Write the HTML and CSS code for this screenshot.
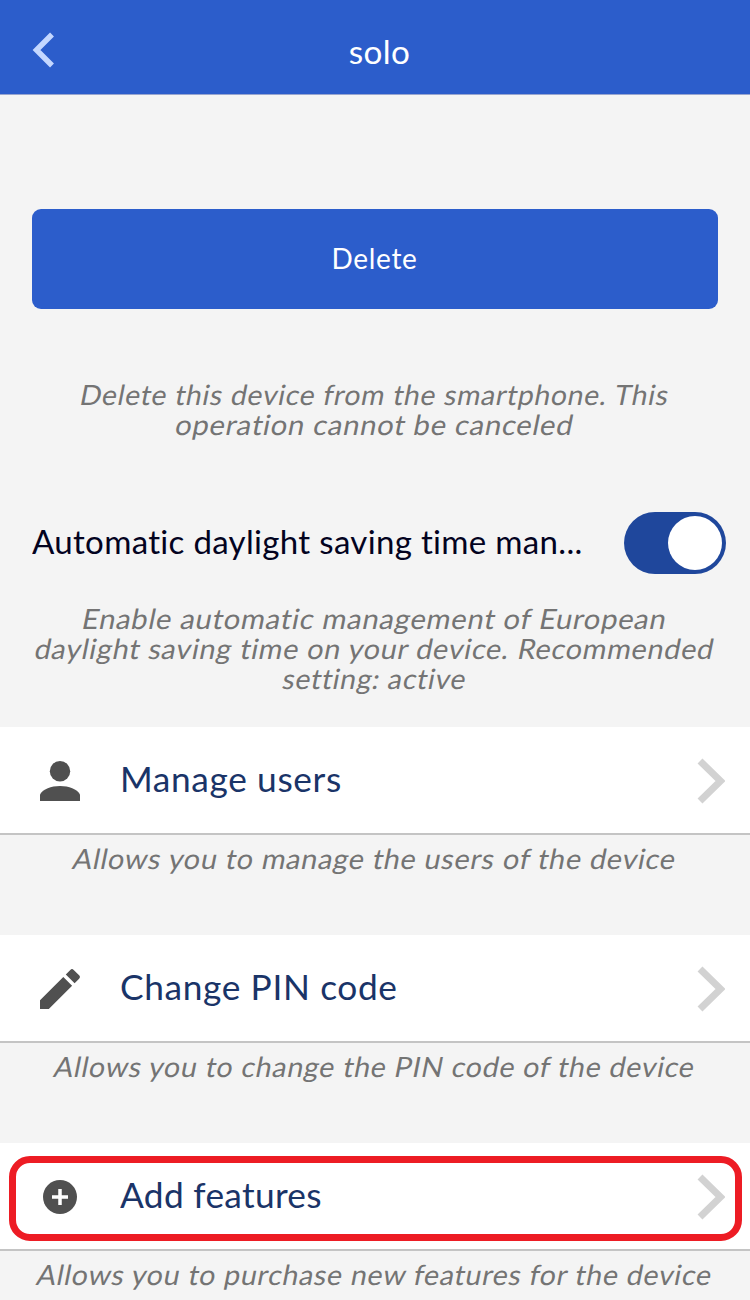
FILE: index.html
```html
<!DOCTYPE html>
<html lang="en">
<head>
    <meta charset="UTF-8">
    <meta name="viewport" content="width=device-width, initial-scale=1.0">
    <title>solo</title>
    <link rel="stylesheet" href="styles.css">
</head>
<body>

    <header class="top-bar">
        <svg class="back" viewBox="0 0 24 38"><path d="M21 3.500L5.500 19L21 34.500"/></svg>
        <h1>solo</h1>
    </header>

    <main>
        <button class="delete-btn">Delete</button>
        <p class="hint hint-delete">
            <span class="line line-narrow">Delete this device from the smartphone. This</span>
            <span class="line line-wide">operation cannot be canceled</span>
        </p>

        <div class="switch-row">
            <span class="switch-label">Automatic daylight saving time man...</span>
            <span class="switch"><span class="knob"></span></span>
        </div>
        <p class="hint hint-dst">
            <span class="line line-wide">Enable automatic management of European</span>
            <span class="line line-medium">daylight saving time on your device. Recommended</span>
            <span class="line line-narrow">setting: active</span>
        </p>

        <div class="item">
            <svg class="icon" viewBox="0 0 40 40"><circle cx="20" cy="10.2" r="10.2"/><path d="M0 40v-6.500C3 28 11 25 20 25s17 3 20 8.500V40z"/></svg>
            <span class="item-label">Manage users</span>
            <svg class="arrow" viewBox="0 0 28 46"><path d="M3 3L23.500 23L3 43"/></svg>
        </div>
        <p class="hint"><span class="line line-medium">Allows you to manage the users of the device</span></p>

        <div class="item">
            <svg class="icon" viewBox="0 0 40 40"><path d="M0 40v-8.800L23.300 7.900L32.100 16.700L8.800 40zM25.800 5.400L30.300.9Q32 -.8 33.700.9L39.100 6.300Q40.800 8 39.100 9.700L34.600 14.200z"/></svg>
            <span class="item-label">Change PIN code</span>
            <svg class="arrow" viewBox="0 0 28 46"><path d="M3 3L23.500 23L3 43"/></svg>
        </div>
        <p class="hint"><span class="line">Allows you to change the PIN code of the device</span></p>

        <div class="item">
            <svg class="icon" viewBox="0 0 40 40"><circle cx="20" cy="20" r="17"/><path class="plus" d="M20 12v16M12 20h16"/></svg>
            <span class="item-label item-label-features">Add features</span>
            <svg class="arrow" viewBox="0 0 28 46"><path d="M3 3L23.500 23L3 43"/></svg>
            <div class="highlight"></div>
        </div>
        <p class="hint"><span class="line">Allows you to purchase new features for the device</span></p>
    </main>

</body>
</html>
```

FILE: styles.css
```css
* {
    box-sizing: border-box;
}
body {
    margin: 0;
    height: 1300px;
    overflow: hidden;
    background: #f4f4f4;
    font-family: Lato, "Open Sans", sans-serif;
}
.top-bar {
    display: grid;
    grid-template-columns: 60px 1fr 50px;
    align-items: center;
    height: 95px;
    padding: 0 32px 0 31px;
    background: #2c5dcb;
    border-bottom: 1px solid #98a5cf;
}
.back {
    width: 24px;
    height: 38px;
    margin-top: 5px;
    fill: none;
    stroke: #c4d7ff;
    stroke-width: 5.500;
}
h1 {
    margin: 10px 0 0;
    color: #fff;
    font-size: 32px;
    font-weight: 400;
    line-height: 40px;
    letter-spacing: 0.4px;
    text-align: center;
    transform: scaleX(1.04);
}
main {
    padding-top: 114px;
}
.delete-btn {
    display: block;
    width: 686px;
    height: 100px;
    margin: 0 auto;
    padding: 0 1px 3px 0;
    border: none;
    border-radius: 9px;
    background: #2c5dcb;
    color: #fff;
    font-family: inherit;
    font-size: 28px;
    letter-spacing: 0.7px;
}
.hint {
    height: 100px;
    margin: 0;
    padding-top: 8px;
    color: #747474;
    font-size: 28px;
    line-height: 30px;
    letter-spacing: 0.7px;
    text-align: center;
    white-space: nowrap;
}
.line {
    display: block;
    transform: scaleX(1.02) skewX(-11deg);
}
.line-narrow {
    transform: scaleX(1.012) skewX(-11deg);
}
.line-medium {
    transform: scaleX(1.029) skewX(-11deg);
}
.line-wide {
    transform: scaleX(1.042) skewX(-11deg);
}
.hint-delete {
    height: 203px;
    padding-top: 70px;
}
.hint-dst {
    height: 153px;
    padding-top: 29px;
}
.switch-row {
    display: flex;
    align-items: center;
    justify-content: space-between;
    height: 62px;
    padding: 0 24px 0 32px;
}
.switch-label {
    padding-bottom: 3px;
    color: #03031f;
    font-size: 32px;
    letter-spacing: 0.3px;
    white-space: nowrap;
    transform: scaleX(1.033);
    transform-origin: left;
}
.switch {
    width: 102px;
    height: 62px;
    padding: 4px;
    border-radius: 31px;
    background: #1f479c;
}
.knob {
    display: block;
    width: 54px;
    height: 54px;
    margin-left: auto;
    border-radius: 50%;
    background: #fff;
}
.item {
    position: relative;
    display: flex;
    align-items: center;
    height: 108px;
    padding: 0 25px 0 40px;
    background: #fff;
    border-bottom: 2px solid #c4c4c4;
}
.icon {
    width: 40px;
    height: 40px;
    margin-top: 2px;
    fill: #505050;
}
.plus {
    fill: none;
    stroke: #fff;
    stroke-width: 3.500;
}
.item-label {
    flex: 1;
    margin-left: 40px;
    padding-bottom: 3px;
    color: #1a3468;
    font-size: 34px;
    letter-spacing: 0.6px;
    transform: scaleX(1.038);
    transform-origin: left;
}
.item-label-features {
    letter-spacing: 0.3px;
}
.arrow {
    width: 28px;
    height: 46px;
    margin-top: 2px;
    fill: none;
    stroke: #d2d2d2;
    stroke-width: 7;
}
.highlight {
    position: absolute;
    top: 13px;
    left: 9px;
    right: 8px;
    height: 85px;
    border: 7px solid #ed1c24;
    border-radius: 21px;
}
```
